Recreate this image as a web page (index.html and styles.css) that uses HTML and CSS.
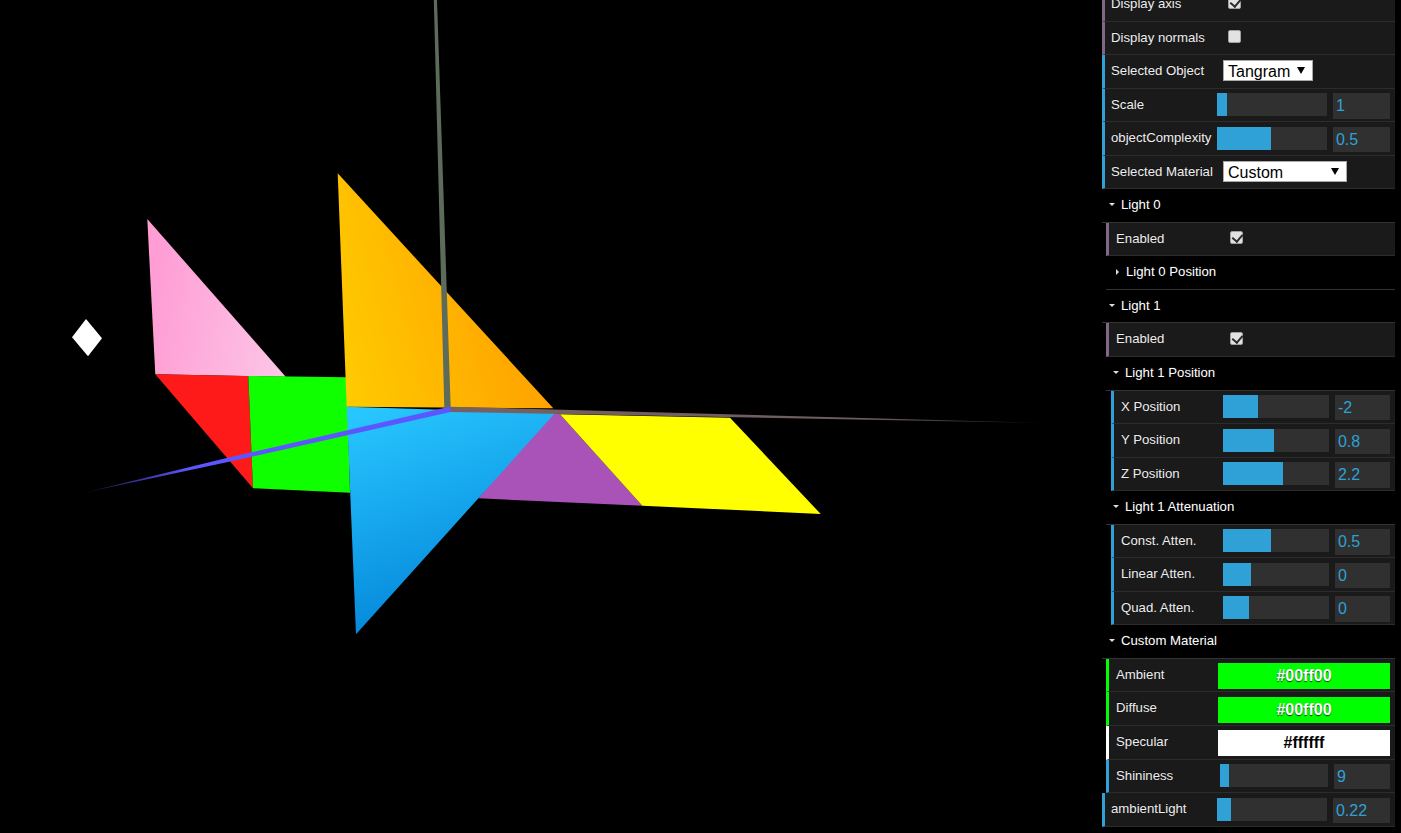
FILE: index.html
```html
<!DOCTYPE html>
<html lang="en">
  <head>
    <meta charset="UTF-8" />
    <title>Tangram</title>
    <link rel="stylesheet" href="styles.css">
  </head>
  <body>
    <svg class="viewer" width="1102" height="833" viewBox="0 0 1102 833">
      <defs>
        <linearGradient id="pink" gradientUnits="userSpaceOnUse" x1="150" y1="300" x2="285" y2="320">
          <stop offset="0" stop-color="#ff9dd4" />
          <stop offset="1" stop-color="#fcc4e6" />
        </linearGradient>
        <linearGradient id="orange" gradientUnits="userSpaceOnUse" x1="350" y1="400" x2="550" y2="350">
          <stop offset="0" stop-color="#ffca00" />
          <stop offset="1" stop-color="#ffa000" />
        </linearGradient>
        <linearGradient id="blue" gradientUnits="userSpaceOnUse" x1="370" y1="410" x2="450" y2="640">
          <stop offset="0" stop-color="#28c6ff" />
          <stop offset="1" stop-color="#0080d6" />
        </linearGradient>
        <linearGradient id="zaxis" gradientUnits="userSpaceOnUse" x1="85" y1="492" x2="190" y2="468">
          <stop offset="0" stop-color="#15143c" />
          <stop offset="1" stop-color="#5c56ff" />
        </linearGradient>
        <linearGradient id="xaxis" gradientUnits="userSpaceOnUse" x1="450" y1="409" x2="1045" y2="423">
          <stop offset="0" stop-color="#776060" />
          <stop offset="0.7" stop-color="#6e5e5e" />
          <stop offset="1" stop-color="#1c1818" />
        </linearGradient>
      </defs>
      <polygon fill="#fff" points="86,319 102,338.3 88,356.3 72,337.3" />
      <polygon fill="url(#pink)" points="147.3,219 285.7,376.7 155.3,374.3" />
      <polygon fill="#ff1a1a" points="155.3,374.3 248.3,376 253,488.3" />
      <polygon fill="#10ff00" points="248.3,376 346.7,377.3 350,492.7 253,488.3" />
      <polygon fill="url(#orange)" points="337.7,173.3 553.3,408.3 346.7,406.7" />
      <polygon fill="#a952b8" points="553,411 560,414.3 642.3,505.7 478.3,498.3" />
      <polygon fill="#ffff00" points="560,414.3 730,417.7 820.7,514 642.3,505.7" />
      <polygon fill="url(#blue)" points="346.7,406.7 450,410 556,412 356,634.3" />
      <polygon fill="#5d6b5b" points="433.8,0 437,0 450.7,408 444.3,408" />
      <polygon fill="url(#xaxis)" points="450,406.7 1045,423 450,412" />
      <polygon fill="url(#zaxis)" points="450.5,406.5 226.7,458 160,474.3 85,492.5 160,476.5 226.7,462.3 450.5,412" />
    </svg>

    <div class="gui">
      <div class="row bool">
        <span class="name">Display axis</span>
        <span class="ctrl"><input class="check" type="checkbox" checked /></span>
      </div>
      <div class="row bool">
        <span class="name">Display normals</span>
        <span class="ctrl"><input class="check" type="checkbox" /></span>
      </div>
      <div class="row num">
        <span class="name">Selected Object</span>
        <span class="ctrl"><span class="pick pick-object"><select><option>Tangram</option></select></span></span>
      </div>
      <div class="row num">
        <span class="name">Scale</span>
        <span class="ctrl slider-wrap">
          <span class="slider"><span class="fill" style="width: 9%"></span></span>
          <input class="value" type="text" value="1" />
        </span>
      </div>
      <div class="row num">
        <span class="name">objectComplexity</span>
        <span class="ctrl slider-wrap">
          <span class="slider"><span class="fill" style="width: 49%"></span></span>
          <input class="value" type="text" value="0.5" />
        </span>
      </div>
      <div class="row num">
        <span class="name">Selected Material</span>
        <span class="ctrl"><span class="pick pick-material"><select><option>Custom</option></select></span></span>
      </div>

      <div class="title open">Light 0</div>
      <div class="folder">
        <div class="row bool">
          <span class="name">Enabled</span>
          <span class="ctrl"><input class="check" type="checkbox" checked /></span>
        </div>
        <div class="title closed">Light 0 Position</div>
      </div>

      <div class="title open">Light 1</div>
      <div class="folder">
        <div class="row bool">
          <span class="name">Enabled</span>
          <span class="ctrl"><input class="check" type="checkbox" checked /></span>
        </div>
        <div class="title open">Light 1 Position</div>
        <div class="folder inner">
          <div class="row num">
            <span class="name">X Position</span>
            <span class="ctrl slider-wrap">
              <span class="slider"><span class="fill" style="width: 33%"></span></span>
              <input class="value" type="text" value="-2" />
            </span>
          </div>
          <div class="row num">
            <span class="name">Y Position</span>
            <span class="ctrl slider-wrap">
              <span class="slider"><span class="fill" style="width: 48%"></span></span>
              <input class="value" type="text" value="0.8" />
            </span>
          </div>
          <div class="row num">
            <span class="name">Z Position</span>
            <span class="ctrl slider-wrap">
              <span class="slider"><span class="fill" style="width: 56.6%"></span></span>
              <input class="value" type="text" value="2.2" />
            </span>
          </div>
        </div>
        <div class="title open">Light 1 Attenuation</div>
        <div class="folder inner">
          <div class="row num">
            <span class="name">Const. Atten.</span>
            <span class="ctrl slider-wrap">
              <span class="slider"><span class="fill" style="width: 45%"></span></span>
              <input class="value" type="text" value="0.5" />
            </span>
          </div>
          <div class="row num">
            <span class="name">Linear Atten.</span>
            <span class="ctrl slider-wrap">
              <span class="slider"><span class="fill" style="width: 26.4%"></span></span>
              <input class="value" type="text" value="0" />
            </span>
          </div>
          <div class="row num">
            <span class="name">Quad. Atten.</span>
            <span class="ctrl slider-wrap">
              <span class="slider"><span class="fill" style="width: 24.5%"></span></span>
              <input class="value" type="text" value="0" />
            </span>
          </div>
        </div>
      </div>

      <div class="title open">Custom Material</div>
      <div class="folder">
        <div class="row color green">
          <span class="name">Ambient</span>
          <span class="ctrl"><input class="swatch green" type="text" value="#00ff00" /></span>
        </div>
        <div class="row color green">
          <span class="name">Diffuse</span>
          <span class="ctrl"><input class="swatch green" type="text" value="#00ff00" /></span>
        </div>
        <div class="row color white">
          <span class="name">Specular</span>
          <span class="ctrl"><input class="swatch white" type="text" value="#ffffff" /></span>
        </div>
        <div class="row num">
          <span class="name">Shininess</span>
          <span class="ctrl slider-wrap">
            <span class="slider"><span class="fill" style="width: 8.3%"></span></span>
            <input class="value" type="text" value="9" />
          </span>
        </div>
      </div>

      <div class="row num">
        <span class="name">ambientLight</span>
        <span class="ctrl slider-wrap">
          <span class="slider"><span class="fill" style="width: 12.7%"></span></span>
          <input class="value" type="text" value="0.22" />
        </span>
      </div>
      <div class="close">Close Controls</div>
    </div>
  </body>
</html>
```
FILE: styles.css
```css
* {
  margin: 0;
  padding: 0;
  box-sizing: border-box;
}

html,
body {
  height: 100%;
  overflow: hidden;
  background: #000000;
}

body {
  display: flex;
  align-items: flex-start;
  font-family: "Liberation Sans", Arial, sans-serif;
  font-size: 13.2px;
  color: #eeeeee;
}

.viewer {
  display: block;
  flex: none;
}

/* panel is scrolled a little, so the first row is cut by the window */
.gui {
  flex: none;
  width: 293px;
  margin-top: -12px;
}

.row {
  display: flex;
  height: 33.55px;
  padding-right: 5px;
  background: #1a1a1a;
  border-left: 3px solid #2fa1d6;
  border-bottom: 1px solid #2c2c2c;
  text-shadow: 0 -1px 0 #111111;
}

.row.bool {
  border-left-color: #806787;
}

.row.green {
  border-left-color: #00ff00;
}

.row.white {
  border-left-color: #ffffff;
}

.name {
  flex: none;
  width: 112px;
  padding-left: 6px;
  line-height: 31px;
  white-space: nowrap;
}

.ctrl {
  flex: 1;
  min-width: 0;
  padding-top: 4.4px;
}

.slider-wrap {
  display: grid;
  grid-template-columns: 1fr 33%;
  column-gap: 6px;
  align-items: start;
}

.slider {
  display: block;
  height: 23px;
  background: #303030;
}

.fill {
  display: block;
  height: 100%;
  background: #2fa1d6;
}

.value {
  display: block;
  width: 100%;
  height: 25.5px;
  padding: 1px 0 0 3px;
  border: none;
  outline: none;
  background: #303030;
  color: #2fa1d6;
  font-family: inherit;
  font-size: 16px;
}

.check {
  appearance: none;
  display: block;
  position: relative;
  width: 13px;
  height: 13px;
  margin: 4px 0 0 11px;
  background: #e2e2e2;
  border: 1px solid #a0a0a0;
  border-radius: 2px;
}

.folder .check {
  margin-left: 10px;
}

.check:checked::after {
  content: "";
  position: absolute;
  left: 3px;
  top: 0;
  width: 5px;
  height: 8px;
  border: solid #2c2c2c;
  border-width: 0 2.5px 2.5px 0;
  transform: rotate(40deg);
}

.pick {
  display: block;
  position: relative;
  height: 21px;
  margin: 1px 0 0 6px;
}

.pick-object {
  width: 90px;
}

.pick-material {
  width: 124px;
}

.pick select {
  appearance: none;
  display: block;
  width: 100%;
  height: 100%;
  padding: 1px 0 0 4px;
  border: 1px solid #a9a9a9;
  border-radius: 0;
  background: #ffffff;
  color: #000000;
  font-family: inherit;
  font-size: 16px;
}

.pick::after {
  content: "";
  position: absolute;
  right: 8px;
  top: 7px;
  border-style: solid;
  border-width: 7px 4px 0;
  border-color: #000000 transparent transparent;
}

.title {
  display: flex;
  align-items: center;
  gap: 6px;
  height: 33.55px;
  padding-left: 7px;
  padding-bottom: 2px;
  background: #000000;
  color: #ffffff;
  border-bottom: 1px solid #333333;
  text-shadow: 0 -1px 0 #111111;
}

.title::before {
  content: "";
  flex: none;
  border-style: solid;
}

.title.open::before {
  border-width: 3px 3px 0;
  border-color: #dddddd transparent transparent;
}

.title.closed::before {
  margin: 0 1px 0 3px;
  border-width: 3px 0 3px 3px;
  border-color: transparent transparent transparent #dddddd;
}

.folder {
  padding-left: 4px;
}

.folder .name {
  width: 111px;
  padding-left: 7px;
}

.folder .title {
  padding-left: 7px;
}

.folder.inner {
  padding-left: 5px;
}

.folder.inner .name {
  width: 109px;
}

.row.color .name {
  width: 109px;
}

.swatch {
  display: block;
  width: 100%;
  height: 26px;
  border: none;
  outline: none;
  text-align: center;
  font-family: inherit;
  font-size: 16px;
  font-weight: bold;
}

.swatch.green {
  background: #00ff00;
  color: #ffffff;
  text-shadow: 0 1px 1px rgba(0, 0, 0, 0.7);
}

.swatch.white {
  background: #ffffff;
  color: #000000;
  text-shadow: 0 1px 1px rgba(255, 255, 255, 0.7);
}

.close {
  height: 30px;
  line-height: 30px;
  text-align: center;
  color: #eeeeee;
}
```
